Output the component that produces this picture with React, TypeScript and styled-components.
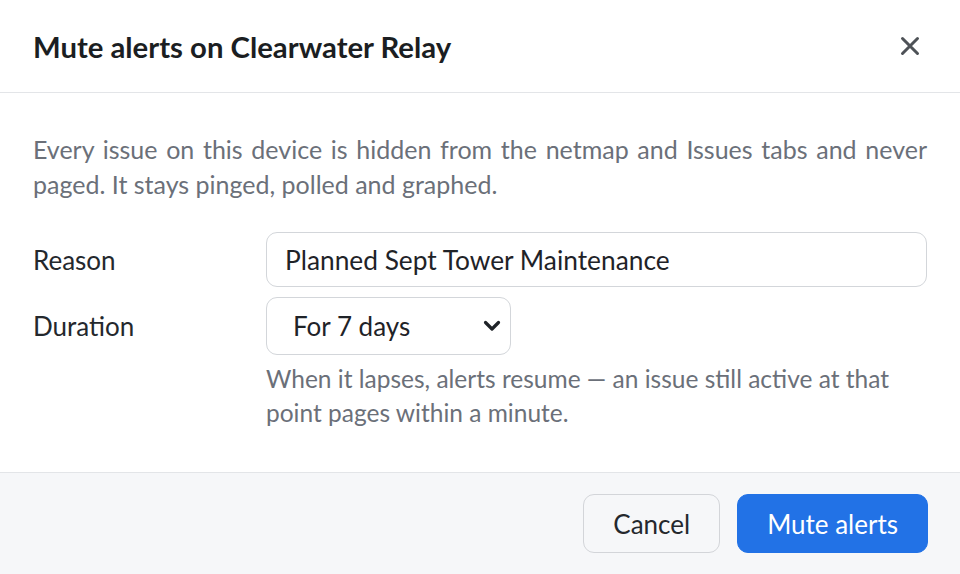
import React from "react";
import styled, { createGlobalStyle } from "styled-components";

const GlobalStyle = createGlobalStyle`
  html, body {
    margin: 0;
    padding: 0;
    background: #ffffff;
  }
  body {
    font-family: Lato, "Noto Sans", sans-serif;
    color: #1f2328;
  }
  * {
    box-sizing: border-box;
  }
`;

const Dialog = styled.div`
  width: 960px;
  height: 574px;
  display: flex;
  flex-direction: column;
  background: #ffffff;
`;

const Header = styled.div`
  height: 93px;
  display: flex;
  align-items: center;
  justify-content: space-between;
  padding: 0 33px;
  border-bottom: 1px solid #e3e5e8;
`;

const Title = styled.h2`
  margin: 0;
  font-size: 29.3px;
  font-weight: 700;
  color: #1b1e22;
`;

const CloseButton = styled.button`
  width: 34px;
  height: 34px;
  border: none;
  background: transparent;
  display: flex;
  align-items: center;
  justify-content: center;
  cursor: pointer;
  padding: 0;
`;

const Body = styled.div`
  flex: 1;
  padding: 39px 33px 0;
`;

const Description = styled.p`
  margin: 0 0 30px;
  font-size: 25px;
  line-height: 35px;
  color: #6b7079;
  text-align: justify;
`;

const Form = styled.div`
  display: grid;
  grid-template-columns: 233px 1fr;
  row-gap: 10px;
  align-items: center;
`;

const Label = styled.label`
  font-size: 26px;
  color: #24282d;
`;

const Field = styled.div`
  display: flex;
  flex-direction: column;
  align-items: flex-start;
`;

const TextInput = styled.input`
  width: 100%;
  height: 55px;
  padding: 0 18px;
  border: 1.5px solid #d3d6da;
  border-radius: 11px;
  font-family: inherit;
  font-size: 26.3px;
  color: #1f2328;
  background: #ffffff;
  outline: none;
`;

const SelectWrap = styled.div`
  position: relative;
  width: 245px;
`;

const Select = styled.select`
  appearance: none;
  width: 100%;
  height: 58px;
  padding: 0 40px 0 26px;
  border: 1.5px solid #d3d6da;
  border-radius: 11px;
  font-family: inherit;
  font-size: 26px;
  color: #1f2328;
  background: #ffffff;
  outline: none;
`;

const Chevron = styled.svg`
  position: absolute;
  right: 10px;
  top: 50%;
  transform: translateY(-50%);
  pointer-events: none;
`;

const HelpRow = styled.div`
  grid-column: 2;
  margin-top: -3px;
`;

const Help = styled.p`
  margin: 0;
  font-size: 24.5px;
  line-height: 34px;
  color: #6b7079;
`;

const Footer = styled.div`
  height: 102px;
  display: flex;
  align-items: center;
  justify-content: flex-end;
  gap: 17px;
  padding: 0 32px;
  background: #f6f7f9;
  border-top: 1px solid #e3e5e8;
`;

const Button = styled.button<{ $primary?: boolean }>`
  height: 59px;
  padding: 0 29px;
  border-radius: 11px;
  font-family: inherit;
  font-size: 26px;
  cursor: pointer;
  border: 1.5px solid ${(p) => (p.$primary ? "#2272e6" : "#d3d5d9")};
  background: ${(p) => (p.$primary ? "#2272e6" : "#f6f7f9")};
  color: ${(p) => (p.$primary ? "#ffffff" : "#24282d")};
`;

export default function App() {
  return (
    <>
      <GlobalStyle />
      <Dialog>
        <Header>
          <Title>Mute alerts on Clearwater Relay</Title>
          <CloseButton aria-label="Close">
            <svg width="20" height="20" viewBox="0 0 20 20">
              <path
                d="M2.5 2.5 L17.5 17.5 M17.5 2.5 L2.5 17.5"
                stroke="#4e5257"
                strokeWidth="3"
                strokeLinecap="round"
              />
            </svg>
          </CloseButton>
        </Header>
        <Body>
          <Description>
            Every issue on this device is hidden from the netmap and Issues tabs
            and never paged. It stays pinged, polled and graphed.
          </Description>
          <Form>
            <Label>Reason</Label>
            <Field>
              <TextInput defaultValue="Planned Sept Tower Maintenance" />
            </Field>
            <Label>Duration</Label>
            <Field>
              <SelectWrap>
                <Select defaultValue="7d">
                  <option value="1h">For 1 hour</option>
                  <option value="1d">For 1 day</option>
                  <option value="7d">For 7 days</option>
                  <option value="30d">For 30 days</option>
                </Select>
                <Chevron width="18" height="12" viewBox="0 0 18 12">
                  <path
                    d="M2.5 2.5 L9 9 L15.5 2.5"
                    fill="none"
                    stroke="#1f2328"
                    strokeWidth="3.2"
                    strokeLinecap="round"
                    strokeLinejoin="round"
                  />
                </Chevron>
              </SelectWrap>
            </Field>
            <HelpRow>
              <Help>
                When it lapses, alerts resume — an issue still active at that
                point pages within a minute.
              </Help>
            </HelpRow>
          </Form>
        </Body>
        <Footer>
          <Button>Cancel</Button>
          <Button $primary>Mute alerts</Button>
        </Footer>
      </Dialog>
    </>
  );
}
